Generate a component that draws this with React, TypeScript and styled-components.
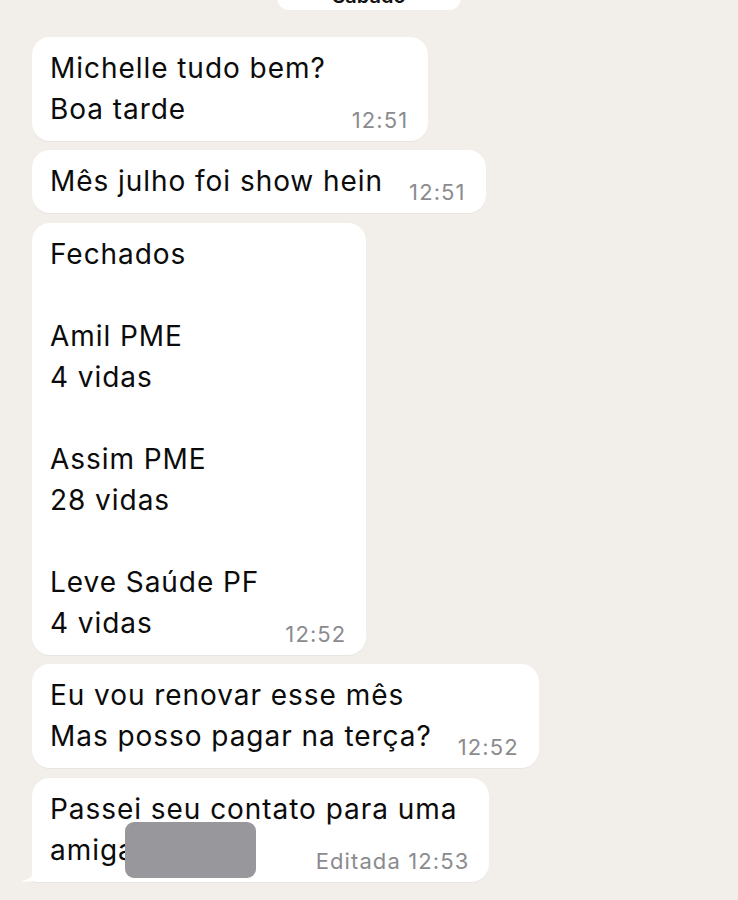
import styled, { createGlobalStyle } from "styled-components";

const GlobalStyle = createGlobalStyle`
  html, body {
    margin: 0;
    padding: 0;
    background: #f2efea;
  }
  body {
    font-family: Inter, "Noto Sans", "Liberation Sans", sans-serif;
    -webkit-font-smoothing: antialiased;
  }
`;

const Chat = styled.div`
  display: flex;
  flex-direction: column;
  align-items: flex-start;
  gap: 9.5px;
  padding: 0 0 20px 32px;
  min-height: 900px;
  box-sizing: border-box;
  overflow: hidden;
`;

const DatePill = styled.div`
  align-self: center;
  margin: -30px 0 17px -32px;
  width: 184px;
  height: 40px;
  box-sizing: border-box;
  padding-bottom: 2px;
  display: flex;
  align-items: flex-end;
  justify-content: center;
  background: #fff;
  border-radius: 12px;
  font-size: 20px;
  font-weight: 600;
  color: #111;
`;

const Bubble = styled.div<{ $tail?: boolean }>`
  position: relative;
  display: flex;
  align-items: flex-end;
  gap: 26px;
  background: #fff;
  border-radius: 18px;
  padding: 11px 20px 11px 18px;
  box-shadow: 0 1px 0.5px rgba(0, 0, 0, 0.04);

  ${({ $tail }) =>
    $tail &&
    `
    border-bottom-left-radius: 4px;
  `}
`;

const Tail = styled.svg`
  position: absolute;
  left: -12px;
  bottom: 0;
  width: 20px;
  height: 20px;
`;

const Text = styled.div`
  font-size: 28px;
  line-height: 41px;
  color: #0b0b0b;
  letter-spacing: 0.95px;
  white-space: pre;
`;

const Column = styled.div`
  display: flex;
  flex-direction: column;
`;

const LastRow = styled.div`
  display: flex;
  align-items: flex-end;
`;

const Redacted = styled.span`
  align-self: center;
  width: 131px;
  height: 56px;
  margin: -8px 60px -7px -10px;
  background: #97979c;
  border-radius: 9px;
`;

const Time = styled.span<{ $push?: boolean }>`
  font-size: 22px;
  line-height: 20px;
  color: #8b8b8f;
  letter-spacing: 1.1px;
  white-space: nowrap;
  ${({ $push }) => $push && `margin-left: auto;`}
`;

const messages = [
  { text: "Michelle tudo bem?\nBoa tarde", time: "12:51" },
  { text: "Mês julho foi show hein", time: "12:51" },
  {
    text: "Fechados\n\nAmil PME\n4 vidas\n\nAssim PME\n28 vidas\n\nLeve Saúde PF\n4 vidas",
    time: "12:52",
  },
  { text: "Eu vou renovar esse mês\nMas posso pagar na terça?", time: "12:52" },
];

export default function App() {
  return (
    <>
      <GlobalStyle />
      <Chat>
        <DatePill>Sábado</DatePill>

        {messages.map((m, i) => (
          <Bubble key={i}>
            <Text>{m.text}</Text>
            <Time>{m.time}</Time>
          </Bubble>
        ))}

        <Bubble $tail>
          <Tail viewBox="0 0 20 20">
            <path d="M20 0 C19 8 16 15 0 20 C8 20 15 19 20 17 Z" fill="#fff" />
          </Tail>
          <Column>
            <Text>Passei seu contato para uma</Text>
            <LastRow>
              <Text>amiga</Text>
              <Redacted />
              <Time $push>Editada 12:53</Time>
            </LastRow>
          </Column>
        </Bubble>
      </Chat>
    </>
  );
}
